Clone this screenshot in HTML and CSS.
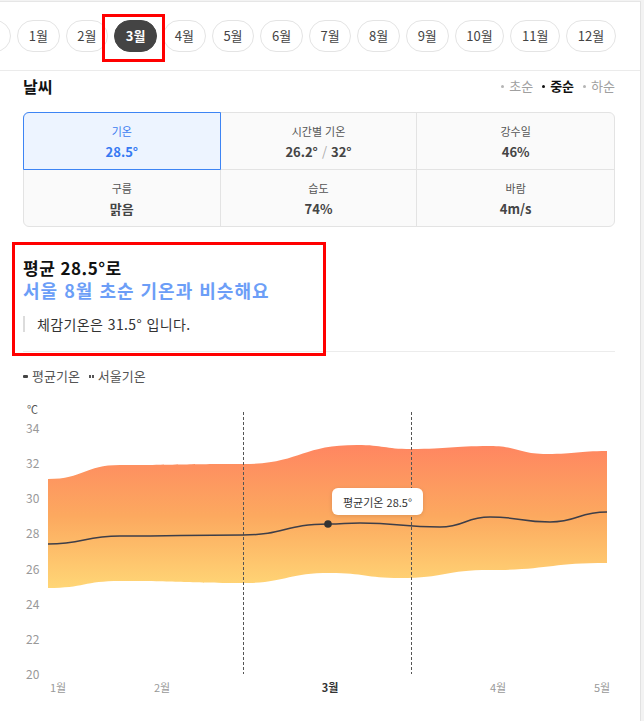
FILE: index.html
```html
<!DOCTYPE html>
<html lang="ko">
<head>
<meta charset="utf-8">
<title>날씨</title>
<link rel="stylesheet" href="styles.css">
</head>
<body>
<div class="page">
  <nav class="months">
    <div class="month-track">
      <span class="pill pill-edge" aria-hidden="true"></span>
      <span class="pill">1월</span>
      <span class="pill">2월</span>
      <span class="pill pill-active">3월</span>
      <span class="pill">4월</span>
      <span class="pill">5월</span>
      <span class="pill">6월</span>
      <span class="pill">7월</span>
      <span class="pill">8월</span>
      <span class="pill">9월</span>
      <span class="pill">10월</span>
      <span class="pill">11월</span>
      <span class="pill">12월</span>
    </div>
    <div class="mark mark-month"></div>
  </nav>

  <section class="weather">
    <div class="weather-head">
      <h2 class="weather-title">날씨</h2>
      <ul class="period">
        <li class="period-item">초순</li>
        <li class="period-item period-on">중순</li>
        <li class="period-item">하순</li>
      </ul>
    </div>

    <div class="stats">
      <div class="stat stat-active">
        <div class="stat-label">기온</div>
        <div class="stat-value">28.5°</div>
      </div>
      <div class="stat">
        <div class="stat-label">시간별 기온</div>
        <div class="stat-value">26.2°<span class="slash">/</span>32°</div>
      </div>
      <div class="stat stat-last-col">
        <div class="stat-label">강수일</div>
        <div class="stat-value">46%</div>
      </div>
      <div class="stat stat-last-row">
        <div class="stat-label">구름</div>
        <div class="stat-value">맑음</div>
      </div>
      <div class="stat stat-last-row">
        <div class="stat-label">습도</div>
        <div class="stat-value">74%</div>
      </div>
      <div class="stat stat-last-row stat-last-col">
        <div class="stat-label">바람</div>
        <div class="stat-value">4m/s</div>
      </div>
    </div>

    <div class="summary">
      <p class="summary-lead">평균 28.5°로</p>
      <p class="summary-compare">서울 8월 초순 기온과 비슷해요</p>
      <p class="summary-feel">체감기온은 31.5° 입니다.</p>
      <div class="mark mark-summary"></div>
    </div>

    <div class="legend">
      <span class="legend-item"><i class="legend-line"></i>평균기온</span>
      <span class="legend-item"><i class="legend-dots"><b></b><b></b></i>서울기온</span>
    </div>
  </section>

  <svg class="chart" width="640" height="310" viewBox="0 396 640 310" xmlns="http://www.w3.org/2000/svg">
    <defs>
      <linearGradient id="band" x1="0" y1="0" x2="0" y2="1">
        <stop offset="0" stop-color="#ff8661"/>
        <stop offset="0.5" stop-color="#fca95f"/>
        <stop offset="1" stop-color="#ffd676"/>
      </linearGradient>
      <filter id="shadow" x="-20%" y="-40%" width="140%" height="180%">
        <feDropShadow dx="0" dy="1" stdDeviation="2" flood-color="#000" flood-opacity="0.12"/>
      </filter>
    </defs>

    <text class="axis-unit" x="27" y="409">℃</text>
    <text class="axis-y" x="26" y="427">34</text>
    <text class="axis-y" x="26" y="462">32</text>
    <text class="axis-y" x="26" y="497">30</text>
    <text class="axis-y" x="26" y="532">28</text>
    <text class="axis-y" x="26" y="568">26</text>
    <text class="axis-y" x="26" y="603">24</text>
    <text class="axis-y" x="26" y="638">22</text>
    <text class="axis-y" x="26" y="673">20</text>

    <path class="band" d="M48,479 C84,479 84,465 120,465 C181,465 181,464 243,464 C300,464 300,445 357,445 C384,445 384,449 411,449 C450,449 450,446 490,446 C518,446 518,454 547,454 C577,454 577,451 607,451 L607,563 C548,563 548,570 490,570 C445,570 445,578 400,578 C365,578 365,573 330,573 C286,573 286,583 243,583 C181,583 181,581 120,581 C84,581 84,588 48,588 Z"/>

    <line class="divider-dash" x1="243.5" y1="412" x2="243.5" y2="674"/>
    <line class="divider-dash" x1="411.5" y1="412" x2="411.5" y2="674"/>

    <path class="mean" d="M48,544 C84,544 84,536 120,536 C181,536 181,535 243,535 C285,535 285,524 328,524 C344,524 344,523 360,523 C400,523 400,527 440,527 C465,527 465,517 490,517 C520,517 520,522 550,522 C578,522 578,512 607,512"/>
    <circle class="mean-dot" cx="328" cy="524" r="3.8"/>

    <rect class="tip-box" x="332" y="488" width="91" height="27" rx="6" filter="url(#shadow)"/>
    <text class="tip-text" x="377.5" y="501.5">평균기온 28.5°</text>

    <text class="axis-x" x="58" y="687">1월</text>
    <text class="axis-x" x="162" y="687">2월</text>
    <text class="axis-x axis-x-on" x="330" y="687">3월</text>
    <text class="axis-x" x="498" y="687">4월</text>
    <text class="axis-x" x="602" y="687">5월</text>
  </svg>
</div>
</body>
</html>
```

FILE: styles.css
```css
* {
  box-sizing: border-box;
}

html, body {
  margin: 0;
  padding: 0;
  background: #f3f3f3;
}

body {
  font-family: "Noto Sans CJK KR", "Noto Sans", sans-serif;
  color: #333;
}

.page {
  width: 641px;
  height: 720px;
  margin-top: 1px;
  background: #fff;
  border-top: 1px solid #e6e6e6;
  border-right: 1px solid #e2e2e2;
  overflow: hidden;
}

/* month selector */
.months {
  position: relative;
  padding: 18px 0;
  border-bottom: 1px solid #ebebeb;
  overflow: hidden;
}

.month-track {
  display: flex;
  gap: 6px;
}

.pill {
  flex: none;
  height: 32px;
  padding: 0 10.7px;
  border: 1px solid #e4e4e4;
  border-radius: 16px;
  font-size: 13px;
  line-height: 30px;
  color: #444;
  background: #fff;
}

.pill-edge {
  width: 49px;
  margin-left: -38px;
}

.pill-active {
  background: #444;
  border-color: #444;
  color: #fff;
  font-weight: 700;
}

.mark {
  position: absolute;
  border: 3px solid #ff0000;
  pointer-events: none;
}

.mark-month {
  left: 102px;
  top: 12px;
  width: 63px;
  height: 48px;
}

/* weather section */
.weather {
  padding: 0 25px 0 23px;
}

.weather-head {
  display: flex;
  align-items: center;
  justify-content: space-between;
  height: 22px;
  margin: 4px 0 15px;
}

.weather-title {
  margin: 0;
  font-size: 16px;
  line-height: 22px;
  font-weight: 700;
  color: #111;
}

.period {
  display: flex;
  gap: 9px;
  margin: 0;
  padding: 0;
  list-style: none;
}

.period-item {
  display: flex;
  align-items: center;
  gap: 5px;
  font-size: 13px;
  line-height: 18px;
  color: #a0a0a0;
}

.period-item::before {
  content: "";
  width: 3px;
  height: 3px;
  border-radius: 50%;
  background: #b5b5b5;
}

.period-on {
  color: #111;
  font-weight: 700;
}

.period-on::before {
  background: #111;
}

/* stats grid */
.stats {
  display: grid;
  grid-template-columns: repeat(3, 1fr);
  border: 1px solid #e3e3e3;
  border-radius: 6px;
  background: #fafafa;
}

.stat {
  position: relative;
  height: 57px;
  padding-top: 11px;
  text-align: center;
  border-right: 1px solid #e3e3e3;
  border-bottom: 1px solid #e3e3e3;
}

.stat-last-col {
  border-right: none;
}

.stat-last-row {
  height: 56px;
  border-bottom: none;
}

.stat-active {
  background: #edf4ff;
}

.stat-active::after {
  content: "";
  position: absolute;
  inset: -1px;
  border: 1px solid #3d84f4;
  border-radius: 6px 0 0 0;
}

.stat-label {
  font-size: 11px;
  line-height: 14px;
  color: #555;
}

.stat-value {
  margin-top: 5px;
  font-size: 13px;
  line-height: 18px;
  font-weight: 700;
  color: #444;
}

.stat-active .stat-label {
  color: #3a7bf0;
}

.stat-active .stat-value {
  color: #3679f2;
}

.slash {
  margin: 0 4px;
  font-weight: 400;
  color: #aaa;
}

/* summary */
.summary {
  position: relative;
  padding: 29px 0 19px;
  border-bottom: 1px solid #ececec;
}

.summary-lead,
.summary-compare {
  margin: 0;
  font-size: 17px;
  line-height: 23px;
  font-weight: 700;
  letter-spacing: 0.5px;
  color: #111;
}

.summary-compare {
  font-size: 18px;
  letter-spacing: 1px;
  color: #6c9ef7;
}

.summary-feel {
  margin: 14px 0 0;
  padding-left: 12px;
  border-left: 2px solid #dcdcdc;
  font-size: 14px;
  line-height: 16px;
  letter-spacing: 0.4px;
  color: #333;
}

.mark-summary {
  left: -11px;
  top: 15px;
  width: 314px;
  height: 114px;
}

/* legend */
.legend {
  display: flex;
  gap: 9px;
  margin-top: 15px;
  font-size: 13px;
  line-height: 18px;
  color: #555;
}

.legend-item {
  display: flex;
  align-items: center;
  gap: 4px;
}

.legend-line {
  width: 5px;
  height: 3px;
  border-radius: 1px;
  background: #444;
}

.legend-dots {
  display: flex;
  gap: 1px;
}

.legend-dots b {
  width: 2px;
  height: 3px;
  background: #555;
}

/* chart */
.chart {
  display: block;
  margin-top: 11px;
  font-family: "Noto Sans CJK KR", "Noto Sans", sans-serif;
}

.axis-unit {
  font-size: 11px;
  fill: #555;
  dominant-baseline: central;
}

.axis-y {
  font-size: 12px;
  fill: #999;
  dominant-baseline: central;
}

.axis-x {
  font-size: 11px;
  fill: #999;
  text-anchor: middle;
  dominant-baseline: central;
}

.axis-x-on {
  fill: #333;
  font-weight: 700;
}

.band {
  fill: url(#band);
}

.divider-dash {
  stroke: #555;
  stroke-width: 1;
  stroke-dasharray: 3 2;
}

.mean {
  fill: none;
  stroke: #3e3e48;
  stroke-width: 1.5;
}

.mean-dot {
  fill: #333;
}

.tip-box {
  fill: #fff;
}

.tip-text {
  font-size: 11px;
  fill: #333;
  text-anchor: middle;
  dominant-baseline: central;
}
```
